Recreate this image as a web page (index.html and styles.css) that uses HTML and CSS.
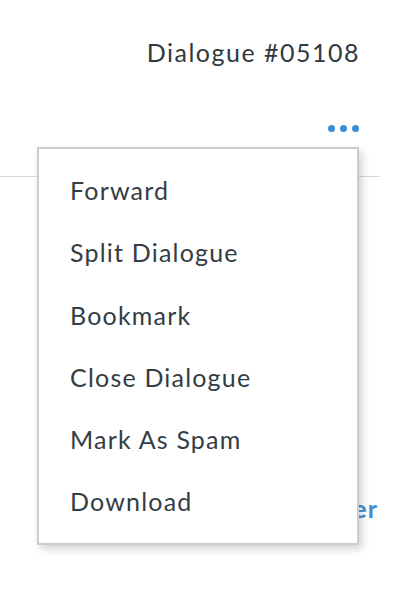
FILE: index.html
```html
<!DOCTYPE html>
<html lang="en">
<head>
  <meta charset="UTF-8" />
  <meta name="viewport" content="width=device-width, initial-scale=1.0" />
  <title>Dialogue #05108</title>
  <link rel="stylesheet" href="styles.css">
</head>
<body>
  <header class="topbar">
    <h1 class="title">Dialogue #05108</h1>
    <div class="actions">
      <button class="more" aria-label="More actions">
        <span class="dot"></span><span class="dot"></span><span class="dot"></span>
      </button>
    </div>
  </header>

  <main class="content">
    <div class="link-row">
      <a class="link" href="#">Transfer</a>
    </div>
  </main>

  <ul class="menu">
    <li>Forward</li>
    <li>Split Dialogue</li>
    <li>Bookmark</li>
    <li>Close Dialogue</li>
    <li>Mark As Spam</li>
    <li>Download</li>
  </ul>
</body>
</html>
```

FILE: styles.css
```css
* {
  box-sizing: border-box;
  margin: 0;
  padding: 0;
}

body {
  font-family: Lato, "Open Sans", sans-serif;
  background: #fff;
  color: #333d44;
  width: 420px;
  height: 602px;
  position: relative;
  overflow: hidden;
}

.topbar {
  width: 380px;
  border-bottom: 1px solid #d9d9d9;
  height: 177px;
  display: flex;
  flex-direction: column;
  align-items: flex-end;
  padding-right: 21px;
}

.title {
  font-size: 25px;
  font-weight: 400;
  letter-spacing: 1.5px;
  line-height: 30px;
  margin-top: 37px;
  margin-right: -1px;
  color: #2f3a40;
}

.actions {
  margin-top: 58px;
}

.more {
  display: flex;
  gap: 5px;
  background: none;
  border: none;
  cursor: pointer;
}

.dot {
  width: 7px;
  height: 7px;
  border-radius: 50%;
  background: #3a8fd4;
}

.content {
  padding: 494px 42px 0 0;
  position: absolute;
  top: 0;
  right: 0;
}

.link-row {
  text-align: right;
}

.link {
  font-size: 25px;
  font-weight: 700;
  letter-spacing: 1px;
  color: #3d8fd1;
  text-decoration: none;
  line-height: 28px;
}

.menu {
  position: absolute;
  left: 37px;
  top: 147px;
  width: 322px;
  list-style: none;
  background: #fff;
  border: 2px solid #cccccc;
  box-shadow: 3px 4px 8px rgba(0, 0, 0, 0.18);
  padding: 10px 0 10px;
}

.menu li {
  font-size: 25px;
  letter-spacing: 1.2px;
  line-height: 62.3px;
  padding-left: 31px;
  color: #333d44;
  cursor: pointer;
}
```
